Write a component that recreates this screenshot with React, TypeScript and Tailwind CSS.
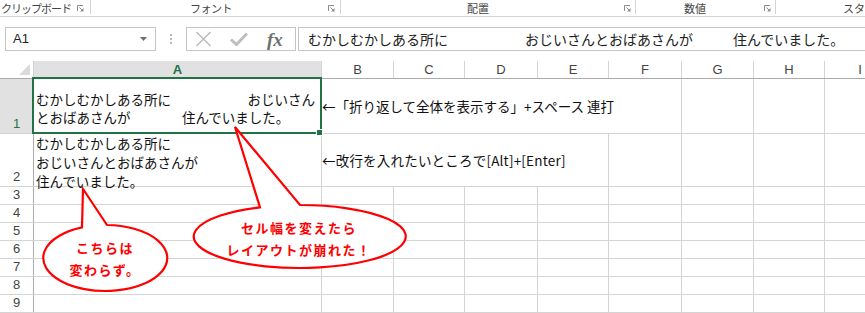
import React from 'react';

const jp = "font-['Noto_Sans_CJK_JP',sans-serif]";
const ui = "font-['Liberation_Sans','Noto_Sans_CJK_JP',sans-serif]";

// ribbon group dialog launcher
function Launcher() {
  return (
    <svg width="7" height="7" viewBox="0 0 7 7" className="shrink-0">
      <path d="M0.5 6V0.5H6" fill="none" stroke="#8c8c8c" strokeWidth="1" />
      <path d="M2.5 2.5L5.5 5.5" stroke="#8c8c8c" strokeWidth="1" />
      <path d="M6.5 3V6.5H3Z" fill="#8c8c8c" />
    </svg>
  );
}

function Sep() {
  return <div className="h-[14px] w-px shrink-0 self-start bg-[#d4d4d4]" />;
}

function Ribbon() {
  return (
    <div className={`flex h-[17px] w-[900px] items-stretch whitespace-nowrap border-b border-[#d5d5d5] text-[11px] leading-[15px] text-[#444] ${jp}`}>
      <div className="flex w-[90px] shrink-0 items-center">
        <span className="ml-[1px] tracking-[-1px]">クリップボード</span>
        <div className="ml-auto mr-[6px]"><Launcher /></div>
      </div>
      <Sep />
      <div className="flex w-[249px] shrink-0 items-center">
        <span className="ml-[99px] tracking-[-0.5px]">フォント</span>
        <div className="ml-auto mr-[5px]"><Launcher /></div>
      </div>
      <Sep />
      <div className="flex w-[294px] shrink-0 items-center">
        <span className="ml-[126px]">配置</span>
        <div className="ml-auto mr-[4px]"><Launcher /></div>
      </div>
      <Sep />
      <div className="flex w-[139px] shrink-0 items-center">
        <span className="ml-[48px]">数値</span>
        <div className="ml-auto mr-[4px]"><Launcher /></div>
      </div>
      <Sep />
      <div className="flex shrink-0 items-center">
        <span className="ml-[67px]">スタイル</span>
      </div>
    </div>
  );
}

function FormulaBar() {
  return (
    <div className="mt-[10px] flex h-[24px] w-[900px] items-stretch">
      <div className="ml-[5px] flex w-[151px] items-center border border-[#c6c6c6] pl-[7px] pr-[8px]">
        <span className={`text-[13px] text-[#222] ${ui}`}>A1</span>
        <svg width="7" height="4" viewBox="0 0 7 4" className="ml-auto">
          <path d="M0 0H7L3.5 4Z" fill="#6f6f6f" />
        </svg>
      </div>
      <div className="flex w-[30px] flex-col items-center justify-center gap-[2px]">
        <div className="h-[2px] w-[2px] bg-[#b8b8b8]" />
        <div className="h-[2px] w-[2px] bg-[#b8b8b8]" />
        <div className="h-[2px] w-[2px] bg-[#b8b8b8]" />
      </div>
      <div className="flex w-[110px] items-center border border-[#c6c6c6]">
        <svg width="17" height="16" viewBox="0 0 17 16" className="ml-[8px]">
          <path d="M1.5 1L15.5 15M15.5 1L1.5 15" stroke="#bdbdbd" strokeWidth="1.6" />
        </svg>
        <svg width="18" height="14" viewBox="0 0 18 14" className="ml-[18px]">
          <path d="M1 7.5L6.5 12.5L17 1.5" fill="none" stroke="#bdbdbd" strokeWidth="3" />
        </svg>
        <span className="ml-[19px] font-['Liberation_Serif',serif] text-[19px] font-bold italic leading-none text-[#707070]">
          fx
        </span>
      </div>
      <div className={`ml-[2px] flex flex-1 items-center border border-[#c6c6c6] pl-[9px] text-[14px] text-[#222] ${jp}`}>
        <span className="inline-block w-[217px] whitespace-nowrap">むかしむかしある所に</span>
        <span className="inline-block w-[208px] whitespace-nowrap">おじいさんとおばあさんが</span>
        <span className="whitespace-nowrap">住んでいました。</span>
      </div>
    </div>
  );
}

const heads = [
  { k: 'B', w: 'w-[72px]' },
  { k: 'C', w: 'w-[71px]' },
  { k: 'D', w: 'w-[73px]' },
  { k: 'E', w: 'w-[71px]' },
  { k: 'F', w: 'w-[73px]' },
  { k: 'G', w: 'w-[72px]' },
  { k: 'H', w: 'w-[71px]' },
  { k: 'I', w: 'w-[71px]' },
];

function ColumnHeader() {
  return (
    <div className={`mt-[10px] flex h-[18px] border-b border-[#ababab] text-[13px] text-[#444] ${ui}`}>
      <div className="flex w-[34px] shrink-0 items-end justify-end border-r border-[#d4d4d4] pb-[3px] pr-[3px]">
        <svg width="11" height="11" viewBox="0 0 11 11">
          <path d="M11 0V11H0Z" fill="#dadada" />
        </svg>
      </div>
      <div className="flex w-[288px] shrink-0 items-center justify-center border-r border-[#d4d4d4] bg-[#e1e1e1] font-bold text-[#217346]">
        A
      </div>
      {heads.map((h) => (
        <div key={h.k} className={`flex ${h.w} shrink-0 items-center justify-center border-r border-[#d4d4d4]`}>
          {h.k}
        </div>
      ))}
    </div>
  );
}

function RowHead({ n, on }: { n: number; on?: boolean }) {
  return (
    <div
      className={`flex w-[34px] shrink-0 items-end justify-center border-r border-[#ababab] pb-[1px] text-[13px] leading-[16px] ${ui} ${
        on ? 'bg-[#e1e1e1] text-[#217346]' : 'text-[#444]'
      }`}
    >
      {n}
    </div>
  );
}

function EmptyCells() {
  return (
    <>
      {heads.map((h) => (
        <div key={h.k} className={`${h.w} shrink-0 border-r border-[#d4d4d4]`} />
      ))}
    </>
  );
}

function Sheet() {
  return (
    <div className="text-[#111]">
      {/* row 1 */}
      <div className="flex h-[55px] border-b border-[#d4d4d4]">
        <RowHead n={1} on />
        <div className={`relative flex w-[288px] shrink-0 flex-col justify-end border-r border-[#d4d4d4] pb-[7px] pl-[2px] pr-[6px] text-[13.5px] leading-[18px] ${jp}`}>
          <div className="flex justify-between whitespace-nowrap">
            <span>むかしむかしある所に</span>
            <span>おじいさん</span>
          </div>
          <div className="flex whitespace-nowrap">
            <span className="inline-block w-[146px]">とおばあさんが</span>
            <span>住んでいました。</span>
          </div>
          <div className="absolute -left-[2px] -top-[2px] z-10 h-[57px] w-[290px] border-2 border-[#217346]">
            <div className="absolute -bottom-[4px] -right-[3px] h-[7px] w-[7px] border border-white bg-[#217346]" />
          </div>
        </div>
        <div className={`flex w-[360px] shrink-0 items-center whitespace-nowrap border-r border-[#d4d4d4] text-[13.5px] ${jp}`}>
          ←「折り返して全体を表示する」+スペース 連打
        </div>
        <div className="w-[72px] shrink-0 border-r border-[#d4d4d4]" />
        <div className="w-[71px] shrink-0 border-r border-[#d4d4d4]" />
        <div className="w-[71px] shrink-0" />
      </div>
      {/* row 2 */}
      <div className="flex h-[53px] border-b border-[#d4d4d4]">
        <RowHead n={2} />
        <div className={`flex w-[288px] shrink-0 flex-col border-r border-[#d4d4d4] pl-[2px] pt-[0px] text-[13.5px] leading-[19px] ${jp}`}>
          <span className="whitespace-nowrap">むかしむかしある所に</span>
          <span className="whitespace-nowrap">おじいさんとおばあさんが</span>
          <span className="whitespace-nowrap">住んでいました。</span>
        </div>
        <div className={`flex w-[287px] shrink-0 items-center whitespace-nowrap border-r border-[#d4d4d4] text-[13.5px] tracking-[0.2px] ${jp}`}>
          ←改行を入れたいところで[Alt]+[Enter]
        </div>
        <div className="w-[73px] shrink-0 border-r border-[#d4d4d4]" />
        <div className="w-[72px] shrink-0 border-r border-[#d4d4d4]" />
        <div className="w-[71px] shrink-0 border-r border-[#d4d4d4]" />
        <div className="w-[71px] shrink-0" />
      </div>
      {[3, 4, 5, 6, 7, 8, 9].map((n) => (
        <div key={n} className="flex h-[18px] border-b border-[#d4d4d4]">
          <RowHead n={n} />
          <div className="w-[288px] shrink-0 border-r border-[#d4d4d4]" />
          <EmptyCells />
        </div>
      ))}
    </div>
  );
}

function Callouts() {
  return (
    <>
      <svg className="pointer-events-none absolute left-0 top-0 z-20" width="865" height="313" viewBox="0 0 865 313">
        <path
          d="M82 227.4 L83 189 L107 225 A62 33 0 1 1 82 227.4 Z"
          fill="#fff"
          stroke="#ff0000"
          strokeWidth="2.2"
          strokeLinejoin="miter"
        />
        <path
          d="M260 207.3 L235 127 L300 205 A106 31.5 0 1 1 260 207.3 Z"
          fill="#fff"
          stroke="#ff0000"
          strokeWidth="2.2"
          strokeLinejoin="miter"
        />
      </svg>
      <div className={`pointer-events-none absolute left-[43px] top-[237px] z-30 flex w-[124px] flex-col items-center text-[13px] font-bold leading-[22px] tracking-[1.5px] text-[#ff0000] ${jp}`}>
        <span>こちらは</span>
        <span>変わらず。</span>
      </div>
      <div className={`pointer-events-none absolute left-[193px] top-[217px] z-30 flex w-[212px] flex-col items-center text-[13px] font-bold leading-[22px] tracking-[1.5px] text-[#ff0000] ${jp}`}>
        <span>セル幅を変えたら</span>
        <span>レイアウトが崩れた！</span>
      </div>
    </>
  );
}

export default function App() {
  return (
    <div className="relative h-[313px] w-[865px] overflow-hidden bg-white">
      <Ribbon />
      <FormulaBar />
      <ColumnHeader />
      <Sheet />
      <Callouts />
    </div>
  );
}
